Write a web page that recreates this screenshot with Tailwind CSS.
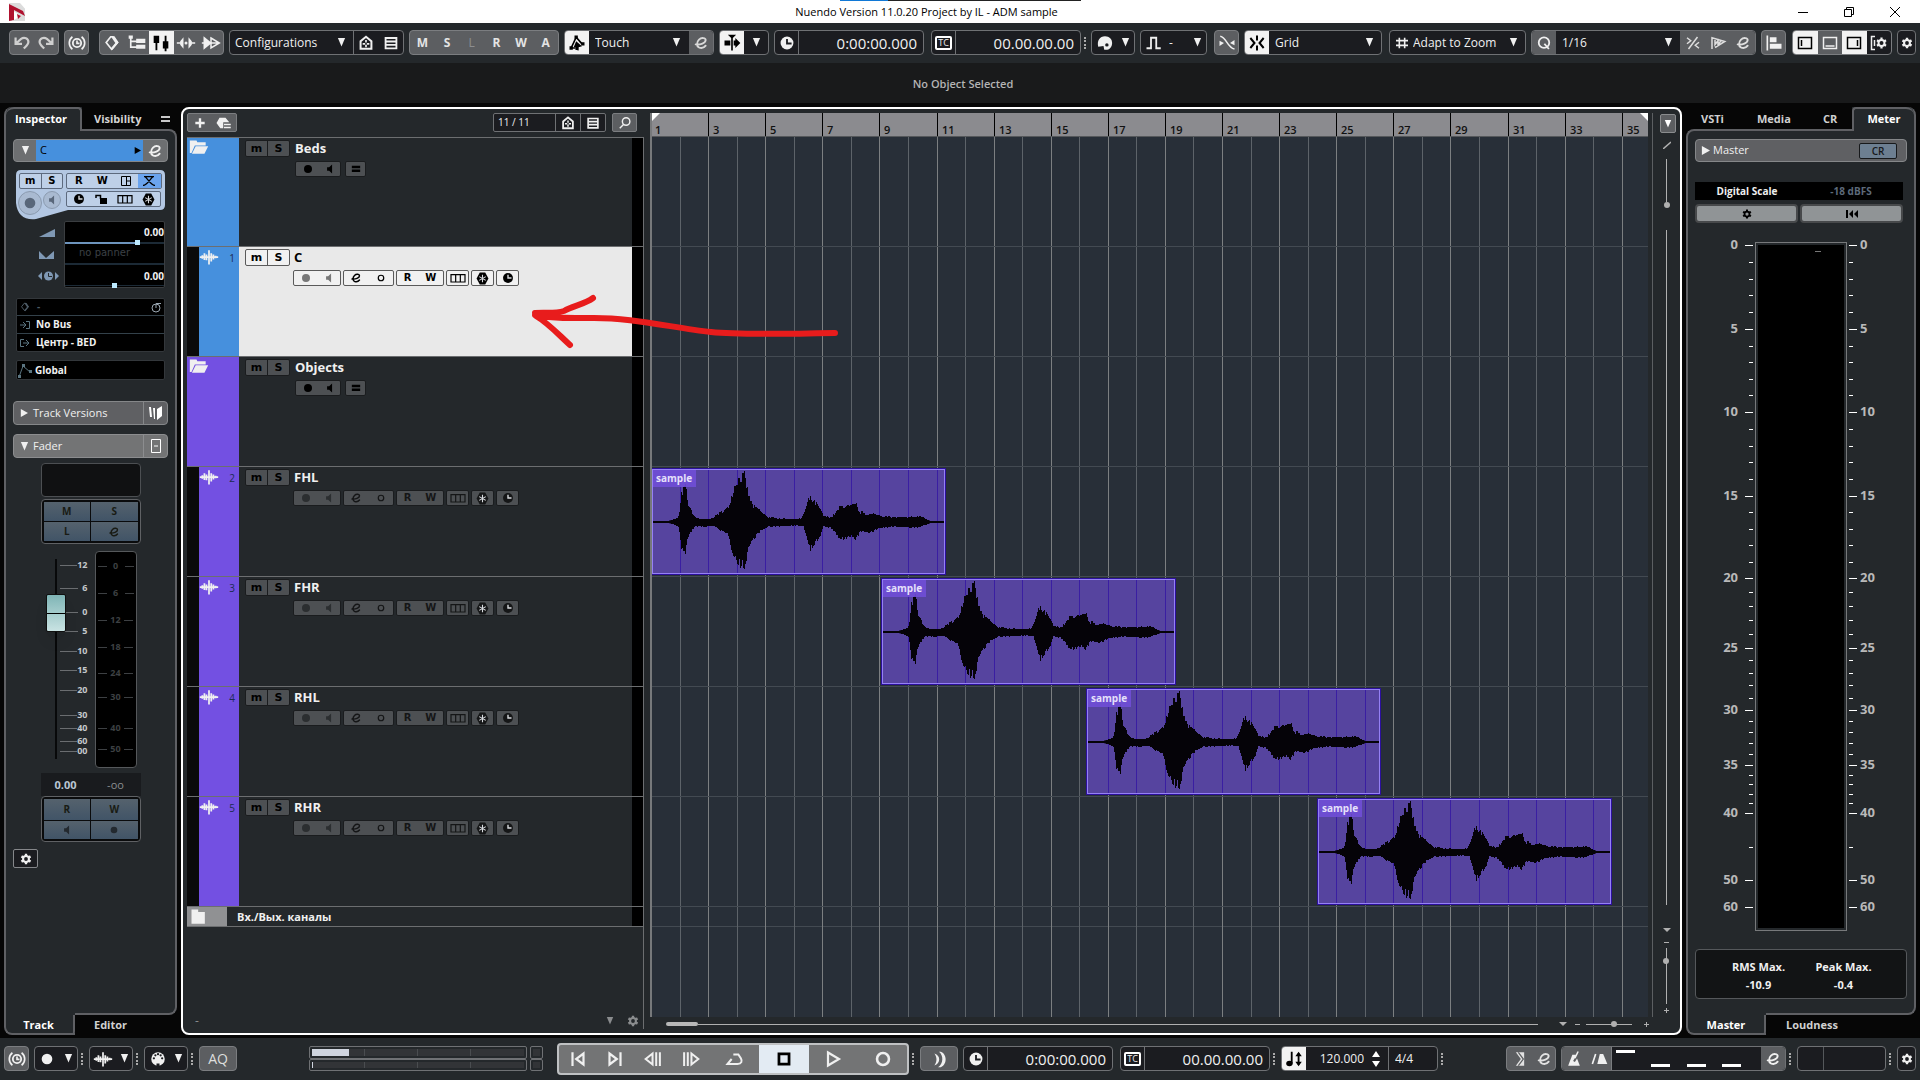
<!DOCTYPE html>
<html lang="en">
<head>
<meta charset="utf-8">
<meta name="viewport" content="width=device-width, initial-scale=1">
<title>Nuendo Version 11.0.20 Project by IL - ADM sample</title>
<script src="https://cdn.jsdelivr.net/npm/@tailwindcss/browser@4"></script>
</head>
<body class="flex min-h-screen flex-col overflow-x-hidden bg-[#060606] font-['Open_Sans','Noto_Sans',sans-serif] text-xs text-[#f0f0f0]">

<!-- Icon library, drawn on a 24px grid -->
<svg class="hidden" xmlns="http://www.w3.org/2000/svg">
  <symbol id="down" viewBox="0 0 10 10"><path fill="currentColor" d="M1 0h8L5 9.500z"/></symbol>
  <symbol id="right" viewBox="0 0 10 10"><path fill="currentColor" d="M1 0l9 5-9 5z"/></symbol>
  <symbol id="undo" viewBox="0 0 24 24"><path fill="none" stroke="currentColor" stroke-width="2.400" d="M5 6v7h7M6 12l5-4.500c3.500-2.500 8-.5 8 3.500 0 2.500-2.500 4.500-5 7"/></symbol>
  <symbol id="redo" viewBox="0 0 24 24"><path fill="none" stroke="currentColor" stroke-width="2.400" d="M19 6v7h-7M18 12l-5-4.500C9.500 5 5 7 5 11c0 2.500 2.500 4.500 5 7"/></symbol>
  <symbol id="sync" viewBox="0 0 24 24"><circle cx="12" cy="12" r="5" fill="none" stroke="currentColor" stroke-width="2.200"/><path fill="none" stroke="currentColor" stroke-width="2" d="M12 9v3.500h3M6.500 4.500c-5 4-5 11 0 15M17.500 4.500c5 4 5 11 0 15"/></symbol>
  <symbol id="cube" viewBox="0 0 24 24"><path fill="none" stroke="currentColor" stroke-width="2" d="M10.500 4.500 5 11.500l6.500 8 7-8-5.500-7z"/><path fill="currentColor" d="M10.500 4H15l5 7.500-7.500 9-2-2L16 12z"/></symbol>
  <symbol id="tree" viewBox="0 0 24 24"><path fill="currentColor" d="M2 3h5v4H2zM11 7h11v5H11zM11 14h11v5H11z"/><path fill="none" stroke="currentColor" stroke-width="2" d="M4.500 6v11H12M5 10h7"/></symbol>
  <symbol id="mixer" viewBox="0 0 24 24"><path fill="currentColor" d="M4 4h6v8H4zM6 11h2v9H6zM14 10h6v8h-6zM16 4h2v7h-2zM16 18h2v3h-2z"/></symbol>
  <symbol id="cross" viewBox="0 0 24 24"><path fill="currentColor" d="M9 5v14l-4-5v-1H1v-2h4v-1zM15 5v14l4-5v-1h4v-2h-4v-1z"/><circle cx="12" cy="12" r="1.800" fill="currentColor"/></symbol>
  <symbol id="ffwd" viewBox="0 0 24 24"><path fill="currentColor" d="M3 4l10 8-10 8z"/><path fill="none" stroke="currentColor" stroke-width="1.800" d="M12 6l10 6-10 6zM1 12h21"/></symbol>
  <symbol id="house" viewBox="0 0 24 24"><path fill="none" stroke="currentColor" stroke-width="2.400" d="M5.500 19V10L12 4.500l6.500 5.500v9z"/><path fill="none" stroke="currentColor" stroke-width="2" d="M12 8.500v3M12 14v3M8 13h3M13 13h3"/></symbol>
  <symbol id="list" viewBox="0 0 24 24"><path fill="none" stroke="currentColor" stroke-width="2.200" d="M5.500 6h13v12.500h-13zM5 10.200h14M5 14.200h14"/></symbol>
  <symbol id="auto" viewBox="0 0 24 24"><path fill="none" stroke="currentColor" stroke-width="2" d="M5 18L11 5l7 8M6 18h4"/><path fill="currentColor" d="M9 3h4v4H9zM17 11h4v4h-4zM3 16h4v4H3zM11 10l7 6-4 1v4l-4-1v-3H8z"/></symbol>
  <symbol id="edit" viewBox="0 0 24 24"><path fill="none" stroke="currentColor" stroke-width="2.800" stroke-linecap="round" d="M4 14c7 1 15-2 15-6.500C19 4.500 13 3 9 7S5 17.500 9.500 19c4 1.200 7.500-.3 9.500-3"/></symbol>
  <symbol id="follow" viewBox="0 0 24 24"><path fill="currentColor" d="M11 4h2v17h-2zM7 2h10l-5 5zM3 9h7v6H3zM14 9h2V6l6 6-6 6v-3h-2z"/></symbol>
  <symbol id="clock" viewBox="0 0 24 24"><circle cx="12" cy="12" r="7" fill="currentColor"/><path fill="none" stroke="#1b1c20" stroke-width="2" d="M12 7.500v5h5"/></symbol>
  <symbol id="clockw" viewBox="0 0 24 24"><circle cx="12" cy="12" r="8.500" fill="currentColor"/><path fill="none" stroke="#d8dade" stroke-width="2.400" d="M12 6.500V12h6"/></symbol>
  <symbol id="palette" viewBox="0 0 24 24"><path fill="currentColor" d="M12 3c6 0 9.500 4 9.500 9S18 21 15 21h-4l-1-5-7 1C1 9 5 3 12 3z"/><circle cx="14.500" cy="14.500" r="2.300" fill="#1b1c20"/></symbol>
  <symbol id="pulse" viewBox="0 0 24 24"><path fill="none" stroke="currentColor" stroke-width="2.400" d="M2 19h6V5h7v14h6"/></symbol>
  <symbol id="xfade" viewBox="0 0 24 24"><path fill="none" stroke="currentColor" stroke-width="2" d="M3 3c9 2 9 15 19 17"/><path fill="currentColor" d="M2 9l6 3-6 4zM22 8l-6 4 6 3z"/></symbol>
  <symbol id="snap" viewBox="0 0 24 24"><path fill="none" stroke="currentColor" stroke-width="2.400" d="M4 6l5 6-5 6M20 6l-5 6 5 6M12 3v6M12 15v6"/></symbol>
  <symbol id="hash" viewBox="0 0 24 24"><path fill="none" stroke="currentColor" stroke-width="2.400" d="M8 4v16M16 4v16M3 8.500h18M3 15.500h18"/></symbol>
  <symbol id="quant" viewBox="0 0 24 24"><circle cx="12" cy="11.500" r="7" fill="none" stroke="currentColor" stroke-width="2.400"/><path stroke="currentColor" stroke-width="2.400" d="M12.500 13l6 7"/></symbol>
  <symbol id="iq" viewBox="0 0 24 24"><path fill="none" stroke="currentColor" stroke-width="2" d="M4 5l5 4-5 4M18 4L6 20M20 11l-5 4 5 4"/></symbol>
  <symbol id="aq" viewBox="0 0 24 24"><path fill="none" stroke="currentColor" stroke-width="2" d="M4 20V5l17 5L8 18M8 8v6l4-5v5l4-5"/></symbol>
  <symbol id="align" viewBox="0 0 24 24"><path fill="currentColor" d="M3 3h2v18H3zM7 5h8v6H7zM7 13h14v6H7z"/></symbol>
  <symbol id="zl" viewBox="0 0 24 24"><path fill="none" stroke="currentColor" stroke-width="1.500" d="M5.500 6.500h13v11h-13zM8.500 9v6"/></symbol>
  <symbol id="zb" viewBox="0 0 24 24"><path fill="none" stroke="currentColor" stroke-width="1.500" d="M5.500 6.500h13v11h-13zM7.500 15h9"/></symbol>
  <symbol id="zr" viewBox="0 0 24 24"><path fill="none" stroke="currentColor" stroke-width="1.500" d="M5.500 6.500h13v11h-13zM15.500 9v6"/></symbol>
  <symbol id="gear" viewBox="0 0 24 24"><circle cx="12" cy="12" r="5" fill="none" stroke="currentColor" stroke-width="3.500"/><path stroke="currentColor" stroke-width="4" d="M12 3v4M12 17v4M4.200 7.500l3 1.800M16.800 14.700l3 1.800M4.200 16.500l3-1.800M16.800 9.300l3-1.800"/></symbol>
  <symbol id="setup" viewBox="0 0 24 24"><path fill="none" stroke="currentColor" stroke-width="1.500" d="M8 5.500H4.500v13H8M7.500 9v6"/><circle cx="14.500" cy="12" r="3" fill="none" stroke="currentColor" stroke-width="2"/><path stroke="currentColor" stroke-width="2.200" d="M14.500 6.500V9M14.500 15v2.500M10 9.300l2 1.200M17 13.500l2 1.200M10 14.700l2-1.200M17 10.500l2-1.200"/></symbol>
  <symbol id="plus" viewBox="0 0 24 24"><path stroke="currentColor" stroke-width="3.500" d="M12 5v14M5 12h14"/></symbol>
  <symbol id="preset" viewBox="0 0 24 24"><path fill="currentColor" d="M6 5h8l5 6h-8v8H7l-5-7z"/><path stroke="currentColor" stroke-width="2.200" d="M12 14h9M12 18h9"/></symbol>
  <symbol id="find" viewBox="0 0 24 24"><circle cx="13.500" cy="10" r="5" fill="none" stroke="currentColor" stroke-width="1.900"/><path stroke="currentColor" stroke-width="2" d="M10 14l-5 5"/></symbol>
  <symbol id="folder" viewBox="0 0 24 24"><path fill="currentColor" d="M1 3h8l1 2h10v4H7L3 18H1z"/><path fill="currentColor" d="M8 10h15l-4.500 9H3.500z"/></symbol>
  <symbol id="shut" viewBox="0 0 24 24"><path fill="currentColor" d="M3 3h8v3h8v14H3z"/></symbol>
  <symbol id="wave" viewBox="0 0 24 24"><path fill="none" stroke="currentColor" stroke-width="2.100" d="M1 12h22M4 10v4M6.500 7.500v8M9 9v7M12 4v17M14.700 7.500v10M17.300 9v6M20 10.500v3"/></symbol>
  <symbol id="rec" viewBox="0 0 24 24"><circle cx="12" cy="12" r="8" fill="currentColor"/></symbol>
  <symbol id="spk" viewBox="0 0 24 24"><path fill="currentColor" d="M5 8h5l7-7v22l-7-7H5z"/></symbol>
  <symbol id="ring" viewBox="0 0 24 24"><circle cx="12" cy="12" r="5.500" fill="none" stroke="currentColor" stroke-width="2.400"/></symbol>
  <symbol id="lanes" viewBox="0 0 24 24"><path fill="none" stroke="currentColor" stroke-width="1.800" d="M1.500 7h21v11h-21zM8.500 7v11M15.500 7v11"/></symbol>
  <symbol id="freeze" viewBox="0 0 24 24"><path fill="currentColor" d="M7 1h10l6 11-6 11H7L1 12z"/><path stroke="#d8dade" stroke-width="2" d="M12 5v14M6 8.500l12 7M18 8.500l-12 7"/></symbol>
  <symbol id="eq" viewBox="0 0 24 24"><path fill="currentColor" d="M2 4h20v6H2zM2 13h20v6H2z"/></symbol>
  <symbol id="start" viewBox="0 0 24 24"><path fill="none" stroke="currentColor" stroke-width="2.400" d="M6 4.500v15M18 6v12l-8-6z"/></symbol>
  <symbol id="end" viewBox="0 0 24 24"><path fill="none" stroke="currentColor" stroke-width="2.400" d="M18 4.500v15M6 6v12l8-6z"/></symbol>
  <symbol id="rew" viewBox="0 0 24 24"><path fill="none" stroke="currentColor" stroke-width="2.200" d="M11.500 6v12L4 12zM15.500 4.500v15M19.500 4.500v15"/></symbol>
  <symbol id="fwd" viewBox="0 0 24 24"><path fill="none" stroke="currentColor" stroke-width="2.200" d="M12.500 6v12l7.500-6zM8.500 4.500v15M4.500 4.500v15"/></symbol>
  <symbol id="cycle" viewBox="0 0 24 24"><path fill="none" stroke="currentColor" stroke-width="2.400" d="M3 18h12c5 0 6-3.500 4-7l-3-4.500H10M8 12l-5 6h7"/></symbol>
  <symbol id="play" viewBox="0 0 24 24"><path fill="none" stroke="currentColor" stroke-width="2.200" d="M6 5.500v13l11-6.500z"/></symbol>
  <symbol id="stop" viewBox="0 0 24 24"><path fill="none" stroke="currentColor" stroke-width="3" d="M6.500 6.500h11v11h-11z"/></symbol>
  <symbol id="midi" viewBox="0 0 24 24"><circle cx="12" cy="12" r="9" fill="currentColor"/><g fill="#1b1c20"><circle cx="6.500" cy="11" r="1.500"/><circle cx="8.500" cy="7" r="1.500"/><circle cx="12" cy="5.500" r="1.500"/><circle cx="15.500" cy="7" r="1.500"/><circle cx="17.500" cy="11" r="1.500"/><path d="M10 18h4v4h-4z"/></g></symbol>
  <symbol id="punch" viewBox="0 0 24 24"><path fill="currentColor" d="M14 4c6 2 8 13 0 17h-3c6-4 6-13 1-17zM7 6c7 2 7 11 0 13 3-4 3-9 0-13z"/></symbol>
  <symbol id="tempo" viewBox="0 0 24 24"><ellipse cx="7" cy="17" rx="3.500" ry="3" fill="currentColor"/><path fill="none" stroke="currentColor" stroke-width="2" d="M9.500 17V4M17 6v12"/><path fill="currentColor" d="M13.500 9L17 4l3.500 5zM13.500 15l3.500 5 3.500-5z"/></symbol>
  <symbol id="merge" viewBox="0 0 24 24"><path fill="currentColor" d="M7 4h10v16H7l6-8z"/><path stroke="#5c5e61" stroke-width="1.500" fill="none" d="M10 4l6 8-6 8"/></symbol>
  <symbol id="metro" viewBox="0 0 24 24"><path fill="currentColor" d="M5 20L10 7h4l5 13z"/><path stroke="#5c5e61" stroke-width="2.500" d="M12 15l6-10"/><path stroke="currentColor" stroke-width="1.800" d="M13 11l4-8"/></symbol>
  <symbol id="count" viewBox="0 0 24 24"><path fill="currentColor" d="M10 18l3-12h4l5 12z"/><path stroke="currentColor" stroke-width="2" d="M4 18L8 6"/></symbol>
</svg>

<!-- Window title -->
<header class="relative flex h-[23px] shrink-0 items-center bg-white text-black">
  <svg class="ml-2 size-5" viewBox="0 0 20 20"><path fill="#dcdcdc" d="M1 1h16v18H1z"/><path fill="#fff" d="M12 1h7v8zM4 19V8l9 6z"/><path fill="#b0122f" d="M1 2l14 7 2 5-11-6v10l-5 1z"/><path fill="#b0122f" d="M9 12l4 2-3 3z"/></svg>
  <h1 class="absolute inset-x-0 pr-[67px] text-center text-[11px] leading-6">Nuendo Version 11.0.20 Project by IL - ADM sample</h1>
  <div class="absolute top-0 left-[840px] flex h-px w-[241px] bg-[#222]"><div class="w-12 bg-[#1078d6]"></div></div>
  <div class="relative ml-auto flex items-center gap-9 pr-5">
    <button aria-label="Minimise"><svg class="size-[10px]" viewBox="0 0 10 10"><path stroke="#000" d="M0 5.500h10"/></svg></button>
    <button aria-label="Restore"><svg class="size-[10px]" viewBox="0 0 10 10"><path fill="none" stroke="#000" d="M.5 2.500h7v7h-7zM2.500 2.500v-2h7v7h-2"/></svg></button>
    <button aria-label="Close"><svg class="size-[10px]" viewBox="0 0 10 10"><path stroke="#000" d="M0 0l10 10M10 0L0 10"/></svg></button>
  </div>
</header>

<!-- Project toolbar -->
<nav aria-label="Project toolbar" class="flex h-10 shrink-0 items-center gap-[5px] bg-[#24282b] pr-1 pl-[9px] pb-px">
  <div class="flex h-[25px] w-[50px] shrink-0 items-center justify-around rounded-sm border border-[#7b7d80] bg-[#5c5e61]">
    <button aria-label="Undo" class="text-[#cfcfcf]"><svg class="size-[22px]"><use href="#undo"/></svg></button>
    <button aria-label="Redo" class="text-[#cfcfcf]"><svg class="size-[22px]"><use href="#redo"/></svg></button>
  </div>
  <button aria-label="Sync" class="mr-[5px] flex size-[25px] shrink-0 items-center justify-center rounded-sm border border-[#7b7d80] bg-[#5c5e61]"><svg class="size-5"><use href="#sync"/></svg></button>
  <div class="flex h-[25px] w-[125px] shrink-0 overflow-hidden rounded-sm border border-[#7b7d80] bg-[#5c5e61]">
    <button aria-label="Edit source" class="flex flex-1 items-center justify-center"><svg class="size-5"><use href="#cube"/></svg></button>
    <button aria-label="Tree" class="flex flex-1 items-center justify-center"><svg class="size-5"><use href="#tree"/></svg></button>
    <button aria-label="Mixer" class="flex flex-1 items-center justify-center bg-[#f2f2f2] text-black"><svg class="size-[22px]"><use href="#mixer"/></svg></button>
    <button aria-label="Crossfade" class="flex flex-1 items-center justify-center"><svg class="size-5"><use href="#cross"/></svg></button>
    <button aria-label="Forward" class="flex flex-1 items-center justify-center"><svg class="size-5"><use href="#ffwd"/></svg></button>
  </div>
  <div class="flex h-[25px] w-[175px] shrink-0 rounded-sm border border-[#6f7174] bg-[#1b1c20]">
    <label class="relative flex flex-1 items-center"><select aria-label="Configurations" class="w-full appearance-none bg-transparent pl-[5px] text-xs outline-none"><option>Configurations</option></select><svg class="pointer-events-none absolute right-[7px] size-[9px]"><use href="#down"/></svg></label>
    <button aria-label="Zones" class="flex w-[25px] items-center justify-center border-l border-[#6f7174]"><svg class="size-5"><use href="#house"/></svg></button>
    <button aria-label="Divide list" class="flex w-[25px] items-center justify-center"><svg class="size-5"><use href="#list"/></svg></button>
  </div>
  <div class="flex h-[25px] w-[150px] shrink-0 rounded-sm border border-[#7b7d80] bg-[#5c5e61] font-bold text-[#e4e4e4]">
    <button class="flex-1">M</button><button class="flex-1">S</button><button class="flex-1 font-normal text-[#8c8e90]">L</button><button class="flex-1">R</button><button class="flex-1">W</button><button class="flex-1">A</button>
  </div>
  <div class="flex h-[25px] w-[150px] shrink-0 overflow-hidden rounded-sm border border-[#6f7174] bg-[#1b1c20]">
    <button aria-label="Automation panel" class="flex w-6 items-center justify-center bg-[#f2f2f2] text-black"><svg class="size-5"><use href="#auto"/></svg></button>
    <label class="relative flex flex-1 items-center"><select aria-label="Automation mode" class="w-full appearance-none bg-transparent pl-1.5 text-xs outline-none"><option>Touch</option></select><svg class="pointer-events-none absolute right-2 size-[9px]"><use href="#down"/></svg></label>
    <button aria-label="Edit automation" class="flex w-6 items-center justify-center bg-[#5c5e61] text-[#d8d8d8]"><svg class="size-4"><use href="#edit"/></svg></button>
  </div>
  <div class="flex h-[25px] w-[50px] shrink-0 overflow-hidden rounded-sm border border-[#6f7174] bg-[#1b1c20]">
    <button aria-label="Auto-scroll" class="flex w-6 items-center justify-center bg-[#f2f2f2] text-black"><svg class="size-5"><use href="#follow"/></svg></button>
    <button aria-label="Auto-scroll options" class="flex flex-1 items-center justify-center"><svg class="size-[9px]"><use href="#down"/></svg></button>
  </div>
  <div class="mr-0.5 flex h-[25px] w-[150px] shrink-0 rounded-sm border border-[#6f7174] bg-[#1b1c20]">
    <button aria-label="Time format" class="flex w-6 items-center justify-center border-r border-[#6f7174]"><svg class="size-[22px]"><use href="#clock"/></svg></button>
    <input aria-label="Primary time" value="0:00:00.000" class="w-0 flex-1 bg-transparent pr-1.5 text-right text-[15px] outline-none">
  </div>
  <div class="flex h-[25px] w-[150px] shrink-0 rounded-sm border border-[#6f7174] bg-[#1b1c20]">
    <button aria-label="Timecode" class="flex w-6 items-center justify-center border-r border-[#6f7174]"><span class="rounded-xs border-2 border-white px-px text-[9px] leading-[10px]">TC</span></button>
    <input aria-label="Secondary time" value="00.00.00.00" class="w-0 flex-1 bg-transparent pr-1.5 text-right text-[15px] outline-none">
  </div>
  <div class="-mx-0.5 h-3 border-l-2 border-dotted border-[#aaa]"></div>
  <button aria-label="Colour" class="ml-[2px] flex h-[25px] w-11 shrink-0 items-center justify-around rounded-sm border border-[#6f7174] bg-[#1b1c20]"><svg class="size-[18px]"><use href="#palette"/></svg><svg class="size-[9px]"><use href="#down"/></svg></button>
  <div class="relative mr-0.5 flex h-[25px] w-[67px] shrink-0 items-center rounded-sm border border-[#6f7174] bg-[#1b1c20]"><svg class="ml-1 size-[18px]"><use href="#pulse"/></svg><select aria-label="Nudge" class="absolute inset-0 appearance-none pl-7 text-xs outline-none"><option>-</option></select><svg class="mr-1 ml-auto size-[9px]"><use href="#down"/></svg></div>
  <button aria-label="Zero crossings" class="flex size-[25px] shrink-0 items-center justify-center rounded-sm border border-[#7b7d80] bg-[#5c5e61]"><svg class="size-[18px]"><use href="#xfade"/></svg></button>
  <div class="mr-0.5 flex h-[25px] w-[138px] shrink-0 overflow-hidden rounded-sm border border-[#6f7174] bg-[#1b1c20]">
    <button aria-label="Snap" class="flex w-6 items-center justify-center bg-[#f2f2f2] text-black"><svg class="size-5"><use href="#snap"/></svg></button>
    <label class="relative flex flex-1 items-center"><select aria-label="Snap type" class="w-full appearance-none bg-transparent pl-1.5 text-xs outline-none"><option>Grid</option></select><svg class="pointer-events-none absolute right-[7px] size-[9px]"><use href="#down"/></svg></label>
  </div>
  <label class="relative flex h-[25px] w-[137px] shrink-0 items-center rounded-sm border border-[#6f7174] bg-[#1b1c20]"><svg class="ml-1 size-4"><use href="#hash"/></svg><select aria-label="Grid type" class="absolute inset-0 appearance-none pl-[23px] text-xs outline-none"><option>Adapt to Zoom</option></select><svg class="mr-[7px] ml-auto size-[9px]"><use href="#down"/></svg></label>
  <div class="flex h-[25px] w-[225px] shrink-0 overflow-hidden rounded-sm border border-[#6f7174] bg-[#1b1c20]">
    <button aria-label="Quantize" class="flex w-6 items-center justify-center bg-[#5c5e61]"><svg class="size-[18px]"><use href="#quant"/></svg></button>
    <label class="relative flex flex-1 items-center"><select aria-label="Quantize preset" class="w-full appearance-none bg-transparent pl-1.5 text-xs outline-none"><option>1/16</option></select><svg class="pointer-events-none absolute right-[7px] size-[9px]"><use href="#down"/></svg></label>
    <div class="flex w-[75px] items-center justify-around bg-[#5c5e61] text-[#dedede]">
      <button aria-label="Iterative quantize"><svg class="size-[18px]"><use href="#iq"/></svg></button><button aria-label="Auto quantize"><svg class="size-[18px]"><use href="#aq"/></svg></button><button aria-label="Quantize panel"><svg class="size-4"><use href="#edit"/></svg></button>
    </div>
  </div>
  <button aria-label="Align" class="flex size-[25px] shrink-0 items-center justify-center rounded-sm border border-[#7b7d80] bg-[#5c5e61]"><svg class="size-5"><use href="#align"/></svg></button>
  <div class="ml-auto flex h-[25px] w-[100px] shrink-0 overflow-hidden rounded-sm border border-[#7b7d80] bg-[#1b1c20]">
    <button aria-label="Left zone" class="flex flex-1 items-center justify-center bg-[#f2f2f2] text-black"><svg class="size-6 shrink-0"><use href="#zl"/></svg></button>
    <button aria-label="Lower zone" class="flex flex-1 items-center justify-center bg-[#5c5e61]"><svg class="size-6 shrink-0"><use href="#zb"/></svg></button>
    <button aria-label="Right zone" class="flex flex-1 items-center justify-center bg-[#f2f2f2] text-black"><svg class="size-6 shrink-0"><use href="#zr"/></svg></button>
    <button aria-label="Window layout" class="flex flex-1 items-center justify-center"><svg class="size-6 shrink-0"><use href="#setup"/></svg></button>
  </div>
  <button aria-label="Toolbar setup" class="flex h-[25px] w-[19px] shrink-0 items-center justify-center rounded-sm border border-[#6f7174] bg-[#1b1c20]"><svg class="size-[14px]"><use href="#gear"/></svg></button>
</nav>

<div class="flex h-10 shrink-0 items-center justify-center bg-[#191a1b] pt-0.5 pl-[6px] text-[11px] font-semibold text-[#b4b4b4]">No Object Selected</div>

<main class="flex flex-1 gap-1 px-1 pt-1 pb-[3px]">
  <!-- Inspector -->
  <aside class="flex w-[173px] shrink-0 flex-col">
    <div class="flex h-8">
      <div class="w-[78px] rounded-tl-lg border-l-2 border-[#5f6064] bg-[#24282b]">
        <button class="h-6 w-full rounded-tl-lg rounded-tr-sm border-t-2 border-r-2 border-[#5f6064] pr-1 pb-px text-center text-[11px] font-bold text-white">Inspector</button>
      </div>
      <div class="flex flex-1 flex-col">
        <div class="flex h-[22px] items-center justify-between pr-[7px] pl-3"><button class="pt-0.5 text-[11px] font-bold text-[#d4d4d4]">Visibility</button><button aria-label="Tab menu" class="mt-0.5 h-[6px] w-[9px] border-y-2 border-[#c8c8c8]"></button></div>
        <div class="-ml-0.5 flex-1 rounded-tr-lg border-t-2 border-r-2 border-[#5f6064] bg-[#24282b]"></div>
      </div>
    </div>
    <div class="flex flex-1 flex-col border-x-2 border-[#5f6064] bg-[#24282b] px-[7px]">
      <div class="flex h-[23px] rounded-sm border border-[#858789] bg-[#6d6f71]">
        <button aria-label="Collapse" class="flex w-[22px] items-center justify-center"><svg class="size-[9px]"><use href="#down"/></svg></button>
        <div class="flex flex-1 items-center justify-between bg-[#4690dd] px-1 text-[11px] text-black"><span>C</span><svg class="-mr-0.5 size-[7px]"><use href="#right"/></svg></div>
        <button aria-label="Edit channel" class="flex w-6 items-center justify-center"><svg class="size-4"><use href="#edit"/></svg></button>
      </div>
      <!-- Channel controls -->
      <div class="relative mx-[3px] mt-2 h-[50px] text-black">
        <svg class="absolute inset-0 h-[50px] w-[149px]" viewBox="0 0 149 50"><path fill="#b3c7e2" d="M5 0h139q5 0 5 5v30q0 5-5 5H52L20 49Q2 51 0 33V5q0-5 5-5z"/></svg>
        <div class="relative flex gap-[3px] p-[3px] pb-0 font-['DejaVu_Sans',sans-serif] text-[10px] font-bold">
          <div class="flex h-4 w-11 rounded-xs border border-[#5d6a7e] bg-[#bed0e8]"><button class="flex-1 border-r border-[#5d6a7e] leading-3">m</button><button class="flex-1 leading-3">S</button></div>
          <div class="flex h-4 flex-1 items-center rounded-xs border border-[#5d6a7e] bg-[#bed0e8]"><button class="flex-1 leading-3">R</button><button class="flex-1 leading-3">W</button><button aria-label="Channel layout" class="flex flex-1 justify-center"><svg class="size-[10px]" viewBox="0 0 10 10"><path fill="none" stroke="#000" d="M.5.5h9v9h-9zM5.500 0v10M5.500 5h4"/></svg></button><button aria-label="Auto fades" class="flex h-full flex-1 items-center justify-center bg-[#6ba4ee]"><svg class="h-[10px] w-3" viewBox="0 0 12 10"><path fill="none" stroke="#000" stroke-width="1.300" d="M1 .5h10M0 9.500c4 0 6-5 10-9M12 9.500c-4 0-6-5-10-9"/></svg></button></div>
        </div>
        <div class="relative flex gap-px pt-0.5 pl-0.5">
          <button aria-label="Record enable" class="flex size-6 items-center justify-center rounded-full border border-[#8b9bb0] bg-[#a9bad1] text-[#59677a]"><svg class="size-4"><use href="#rec"/></svg></button>
          <button aria-label="Monitor" class="flex size-[18px] items-center justify-center rounded-full border border-[#8b9bb0] bg-[#a9bad1] text-[#59677a]"><svg class="size-[10px]"><use href="#spk"/></svg></button>
          <div class="ml-1 flex h-4 w-[95px] items-center justify-around rounded-xs border border-[#5d6a7e] bg-[#bed0e8]"><button aria-label="Time base"><svg class="size-[14px]"><use href="#clockw"/></svg></button><button aria-label="Lock"><svg class="h-[10px] w-3" viewBox="0 0 12 10"><path d="M5 4h7v6H5z"/><path fill="none" stroke="#000" stroke-width="1.500" d="M1 4V1.500h4.500V5"/></svg></button><button aria-label="Lanes"><svg class="size-4"><use href="#lanes"/></svg></button><button aria-label="Freeze"><svg class="size-[13px]"><use href="#freeze"/></svg></button></div>
        </div>
      </div>
      <!-- Volume, pan, delay -->
      <div class="mx-[3px] mt-px flex">
        <div class="flex w-12 flex-col items-end gap-3 pt-2 pr-[9px] text-[#7f98b4]">
          <svg class="h-2 w-4" viewBox="0 0 16 8"><path fill="currentColor" d="M0 8h16V0z"/></svg>
          <svg class="mt-0.5 h-2 w-4" viewBox="0 0 16 8"><path fill="currentColor" d="M0 0l7 7 8-7v8H0z"/></svg>
          <svg class="-mr-1 h-[10px] w-[21px]" viewBox="0 0 21 10"><circle cx="10.500" cy="5" r="4.500" fill="currentColor"/><path fill="currentColor" d="M4 1v8L0 5zM17 1v8l4-4z"/><path fill="none" stroke="#24282b" d="M10.500 2v3.500H14"/></svg>
        </div>
        <div class="h-[67px] flex-1 rounded-xs border border-[#3a3d40] bg-black text-[10px] font-bold">
          <div class="h-5 pt-[3px] text-right leading-[15px]">0.00</div>
          <div class="relative h-[2px] bg-[#1c2a36]"><div class="h-full w-[72px] bg-[#6d94bd]"></div><div class="absolute -top-0.5 left-[70px] h-[5px] w-[5px] bg-[#bdeaff]"></div></div>
          <div class="h-[19px] pl-3.5 font-['DejaVu_Sans',sans-serif] text-[10px] leading-[18px] font-normal text-[#3c4146]">no panner</div>
          <div class="h-[2px] bg-[#1c2a36]"></div>
          <div class="h-5 pt-1 text-right leading-[15px]">0.00</div>
          <div class="relative h-px bg-[#1c2a36]"><div class="absolute -top-0.5 left-[47px] h-[5px] w-[5px] bg-[#bdeaff]"></div></div>
        </div>
      </div>
      <div class="mx-[3px] mt-2.5 rounded-xs border border-[#33373b] bg-black text-[10px] font-bold">
        <button class="flex h-[17px] w-full items-center gap-1 border-b border-[#33414a] px-0.5 text-[#4d5b66]"><svg class="size-3"><use href="#cube"/></svg><span class="mr-auto pl-0.5">-</span><svg class="size-3" viewBox="0 0 12 12"><circle cx="6" cy="7" r="4" fill="none" stroke="#9aa7b2"/><path stroke="#9aa7b2" d="M6 3v4M6 2.500h5"/></svg></button>
        <button class="flex h-[18px] w-full items-center gap-1.5 border-b border-[#33414a] pt-px pl-[3px]"><svg class="size-[10px]" viewBox="0 0 10 10"><path fill="none" stroke="#5b7581" d="M0 5h6M3 2l3 3-3 3M6 1.500h3.500v7H6"/></svg>No Bus</button>
        <button class="flex h-[17px] w-full items-center gap-1.5 pl-[3px]"><svg class="size-[10px]" viewBox="0 0 10 10"><path fill="none" stroke="#5b7581" d="M3 5h6M6 2l3 3-3 3M4 1.500H.5v7H4"/></svg>Центр - BED</button>
      </div>
      <button class="mx-[3px] mt-2 flex h-5 items-center gap-[3px] rounded-xs border border-[#33373b] bg-black pt-0.5 pl-px text-[10px] font-bold"><svg class="h-3.5 w-3.5" viewBox="0 0 14 14"><path fill="none" stroke="#5b7581" d="M1 13L5 2l7 6"/><path fill="#5b7581" d="M0 11h3v3H0zM4 0h3v3H4zM11 6h3v3h-3z"/></svg>Global</button>
      <div class="mt-[21px] flex h-6 rounded-sm border border-[#858789] bg-[#5f6063] text-[11px]">
        <button class="flex flex-1 items-center gap-[5px] pl-1.5"><svg class="size-2"><use href="#right"/></svg>Track Versions</button>
        <button aria-label="Version options" class="flex w-6 items-center justify-center border-l border-[#858789]"><svg class="h-[14px] w-[14px]" viewBox="0 0 14 14"><path fill="#fff" d="M0 1h2l1 10H1zM4 2h2v11H5zM8 3l5-3v10l-5 4z"/></svg></button>
      </div>
      <div class="mt-[9px] flex h-6 rounded-sm border border-[#8c8d8f] bg-[#737475] text-[11px]">
        <button class="flex flex-1 items-center gap-1 pl-1.5"><svg class="size-[9px]"><use href="#down"/></svg>Fader</button>
        <button aria-label="Fader options" class="flex w-6 items-center justify-center border-l border-[#8c8d8f]"><svg class="h-[14px] w-[10px]" viewBox="0 0 10 14"><path fill="none" stroke="#fff" d="M.5.500h9v13h-9zM3 7h4"/></svg></button>
      </div>
      <div class="mx-auto w-[100px]">
        <div class="mt-[5px] h-[34px] rounded-sm border border-[#4c4f52] bg-[#101112]"></div>
        <div class="mt-0.5 grid h-[45px] grid-cols-2 gap-px rounded-sm border border-[#5f6164] bg-[#0a0b0c] p-0.5 text-[10px] font-bold text-[#191b14]">
          <button class="bg-linear-to-b from-[#55626d] to-[#415467]">M</button><button class="bg-linear-to-b from-[#55626d] to-[#415467]">S</button><button class="bg-linear-to-b from-[#55626d] to-[#415467]">L</button><button aria-label="Edit" class="flex items-center justify-center bg-linear-to-b from-[#55626d] to-[#415467]"><svg class="size-3"><use href="#edit"/></svg></button>
        </div>
      </div>
      <!-- Fader with scale and level meter -->
      <div class="mx-auto flex h-[224px] w-[100px] pt-[7px]">
        <div id="faderScale" class="relative h-full w-[50px] text-[9px] font-bold text-[#c4c8cc]">
          <div class="absolute top-2 left-[14px] h-[200px] w-0.5 bg-[#08090a]"></div>
          <div class="absolute top-[43px] left-[5px] z-10 h-[38px] w-5 rounded-xs border border-[#101010] bg-linear-to-b from-[#7fb5b6] to-[#c9e3e3] shadow-lg"><div class="mt-[18px] h-px bg-black"></div></div>
        </div>
        <div id="meterScale" class="relative ml-1 h-[217px] w-[42px] rounded-sm border border-[#55585b] bg-black text-[9px] font-bold text-[#3d4043]"></div>
      </div>
      <div class="mx-auto w-[100px]">
        <div class="mt-[5px] grid h-[23px] grid-cols-2 place-items-center bg-[#191b1e] pt-px text-[11px] font-bold text-[#b9c6d3]"><span>0.00</span><span class="font-normal text-[#8a8d90]">-oo</span></div>
        <div class="grid h-[46px] grid-cols-2 gap-px rounded-sm border border-[#5f6164] bg-[#0a0b0c] p-0.5 text-[10px] font-bold text-[#191b14]">
          <button class="bg-linear-to-b from-[#55626d] to-[#415467]">R</button><button class="bg-linear-to-b from-[#55626d] to-[#415467]">W</button><button aria-label="Monitor" class="flex items-center justify-center bg-linear-to-b from-[#55626d] to-[#415467] text-[#23292f]"><svg class="size-[10px]"><use href="#spk"/></svg></button><button aria-label="Record" class="flex items-center justify-center bg-linear-to-b from-[#55626d] to-[#415467] text-[#23292f]"><svg class="size-[10px]"><use href="#rec"/></svg></button>
        </div>
      </div>
      <button aria-label="Inspector setup" class="mt-[7px] flex h-[19px] w-[25px] items-center justify-center rounded-xs border border-[#85878a] bg-[#1b1c20]"><svg class="size-[14px]"><use href="#gear"/></svg></button>
    </div>
    <div class="flex h-7 text-[11px] font-bold">
      <div class="flex w-[71px] flex-col rounded-bl-lg border-b-2 border-l-2 border-[#5f6064] bg-[#24282b]"><div class="h-2"></div><button class="-mb-0.5 flex-1 rounded-br-sm border-r-2 border-[#5f6064] pr-0.5 text-white">Track</button></div>
      <div class="flex flex-1 flex-col"><div class="h-2 rounded-br-lg border-r-2 border-b-2 border-[#5f6064] bg-[#24282b]"></div><button class="self-start pl-[19px] leading-5 text-[#d0d0d0]">Editor</button></div>
    </div>
  </aside>

  <!-- Project window -->
  <section class="relative flex min-w-0 flex-1 rounded-lg border-2 border-white bg-[#24282b]">
    <div class="flex w-[461px] shrink-0 flex-col pt-1 pl-1">
      <div class="flex h-6 items-start">
        <div class="flex h-[19px] w-[50px] items-center justify-around rounded-xs border border-[#7b7d80] bg-[#5c5e61]"><button aria-label="Add track"><svg class="size-4"><use href="#plus"/></svg></button><button aria-label="Track preset"><svg class="size-[18px]"><use href="#preset"/></svg></button></div>
        <div class="ml-auto flex h-[19px] w-[113px] items-center rounded-xs border border-[#6f7174] bg-[#1b1c20] text-[10px]"><span class="flex-1 pl-1">11 / 11</span><button aria-label="Visibility agents" class="flex h-full w-[25px] items-center justify-center border-l border-[#6f7174]"><svg class="size-[18px]"><use href="#house"/></svg></button><button aria-label="Track types" class="flex h-full w-[25px] items-center justify-center border-l border-[#6f7174]"><svg class="size-[18px]"><use href="#list"/></svg></button></div>
        <button aria-label="Find track" class="ml-1.5 mr-[7px] flex h-[19px] w-[25px] items-center justify-center rounded-xs border border-[#7b7d80] bg-[#5c5e61]"><svg class="size-[18px]"><use href="#find"/></svg></button>
      </div>
      <div id="tracks" class="flex flex-1 flex-col border-t border-r border-[#6c6e70]"></div>
      <div class="flex h-4 items-center gap-3 border-r border-[#6c6e70] pr-[3px] pl-2 text-[#8a8c8e]"><span class="mr-auto">-</span><svg class="size-2"><use href="#down"/></svg><svg class="size-[14px]"><use href="#gear"/></svg></div>
      <div class="h-1"></div>
    </div>
    <div class="ml-[6px] flex min-w-0 flex-1 flex-col pt-1">
      <div class="flex min-h-0 flex-1">
        <div class="relative flex min-w-0 flex-1 flex-col border-l-2 border-[#77797b]">
          <div id="ruler" class="relative mr-1 h-6 overflow-hidden border-b border-[#55585b] bg-[#8b8b8f] text-[11px] font-semibold text-[#111]">
            <svg class="absolute top-0 left-0 size-2" viewBox="0 0 8 8"><path fill="#fff" d="M0 0h8L0 8z"/></svg>
            <svg class="absolute top-0 right-0 size-2" viewBox="0 0 8 8"><path fill="#fff" d="M0 0h8v8z"/></svg>
          </div>
          <div id="lanes-area" class="relative mr-1 flex-1 overflow-hidden bg-[#282f38]"></div>
        </div>
        <div class="flex w-7 flex-col items-center border-l border-[#5c5f62] text-[#b0b0b0]">
          <button aria-label="Ruler menu" class="mt-px mr-0.5 ml-1 flex h-[19px] w-4 items-center justify-center rounded-xs border border-[#8a8c8e] bg-[#5c5e61] text-white"><svg class="size-2"><use href="#down"/></svg></button>
          <svg class="mt-2 size-2" viewBox="0 0 8 8"><path stroke="currentColor" stroke-width="1.500" d="M0 8l8-7"/></svg>
          <div class="mt-2.5 h-[43px] w-px bg-current"></div><div class="size-[6px] rounded-full bg-current"></div>
          <div class="mt-[22px] w-px flex-1 bg-current"></div>
          <svg class="mt-[21px] size-2" viewBox="0 0 8 8"><path fill="currentColor" d="M0 2h8L4 6z"/></svg>
          <div class="mt-2 h-px w-[5px] bg-current"></div>
          <div class="relative mt-[5px] h-14 w-px bg-current"><div class="absolute top-2.5 -left-[3px] size-[6px] rounded-full bg-current"></div></div>
          <svg class="mt-1 size-[5px]" viewBox="0 0 5 5"><path stroke="currentColor" d="M2.500 0v5M0 2.500h5"/></svg>
          <div class="h-1"></div>
        </div>
      </div>
      <div class="flex h-4 items-center pr-[31px] pl-4 pb-0.5 text-[#b0b0b0]">
        <div class="h-1 w-8 rounded-full bg-[#b8b8b8]"></div><div class="h-px flex-1 bg-current"></div>
        <svg class="ml-[21px] size-2" viewBox="0 0 8 8"><path fill="currentColor" d="M0 2h8L4 6z"/></svg>
        <div class="ml-2 h-px w-[5px] bg-current"></div>
        <div class="relative mx-1.5 h-px w-[46px] bg-current"><div class="absolute -top-[3px] left-[25px] size-[6px] rounded-full bg-current"></div></div>
        <svg class="ml-1.5 size-[5px]" viewBox="0 0 5 5"><path stroke="currentColor" d="M2.500 0v5M0 2.500h5"/></svg>
      </div>
    </div>
    <!-- Hand-drawn annotation -->
    <svg class="pointer-events-none absolute top-[181px] left-[344px] h-[64px] w-[320px]" viewBox="0 0 320 64" fill="none" stroke="#e81c1c" stroke-width="6" stroke-linecap="round" stroke-linejoin="round"><path d="M66 8c-8 6-20 8-29 13-10 3-19 1-29 2M308 43c-45 1-95 2-124-1-38-4-80-15-122-14-17 0-36 1-54-3M9 26c12 7 22 18 34 29"/></svg>
  </section>

  <!-- Meter panel -->
  <aside class="flex w-[230px] shrink-0 flex-col">
    <div class="flex h-8 text-[11px] font-bold text-[#d0d0d0]">
      <div class="flex flex-1 flex-col">
        <div class="flex h-[22px] items-center pt-0.5 pl-[15px]"><button class="w-14 text-left">VSTi</button><button class="w-[66px] text-left">Media</button><button>CR</button></div>
        <div class="-mr-0.5 flex-1 rounded-tl-lg border-t-2 border-l-2 border-[#5f6064] bg-[#24282b]"></div>
      </div>
      <div class="w-16 rounded-tr-lg border-r-2 border-[#5f6064] bg-[#24282b]"><button class="h-6 w-full rounded-tl-sm rounded-tr-lg border-t-2 border-l-2 border-[#5f6064] pb-px text-white">Meter</button></div>
    </div>
    <div class="flex flex-1 flex-col border-x-2 border-[#5f6064] bg-[#24282b] px-[7px]">
      <div class="flex h-[23px] items-center gap-[3px] rounded-sm border border-[#858789] bg-[#5f6063] pr-[9px] pl-[5px] text-[11px]"><svg class="size-[9px]"><use href="#right"/></svg><span class="mr-auto">Master</span><button class="h-4 w-[38px] rounded-xs border border-[#17191b] bg-[#6d7f91] text-[10px] leading-3 font-semibold text-[#17191b]">CR</button></div>
      <div class="mt-5 mr-1 grid h-[18px] grid-cols-2 place-items-center bg-black pt-0.5 text-[10px] font-bold"><span>Digital Scale</span><span class="text-[#5d6a7a]">-18 dBFS</span></div>
      <div class="mt-1 mr-1 grid h-[19px] grid-cols-2 gap-0.5 text-black">
        <button aria-label="Meter settings" class="flex items-center justify-center rounded-sm border-2 border-[#47494b] bg-[#909496]"><svg class="size-3"><use href="#gear"/></svg></button>
        <button aria-label="Reset meter" class="flex items-center justify-center rounded-sm border-2 border-[#47494b] bg-[#909496]"><svg class="h-2 w-3" viewBox="0 0 12 8"><path d="M0 0h2v8H0zM7 0v8L3 4zM12 0v8L8 4z"/></svg></button>
      </div>
      <div class="relative mt-[19px] h-[689px]">
        <div class="absolute inset-y-0 left-[60px] w-[92px] border border-[#77797b] bg-black outline-2 -outline-offset-3 outline-[#24282b]"><div class="mt-[8px] ml-[59px] h-px w-1.5 bg-[#777]"></div></div>
        <div id="masterScale" class="absolute inset-0 text-[13px] font-bold text-[#b9b9b9]"></div>
      </div>
      <dl class="mt-[18px] grid h-[50px] grid-cols-2 content-center rounded-sm border border-[#55585b] bg-[#121415] px-5 pt-[3px] text-center text-[11px] leading-[18px] font-bold"><dt>RMS Max.</dt><dt>Peak Max.</dt><dd>-10.9</dd><dd>-0.4</dd></dl>
    </div>
    <div class="flex h-7 text-[11px] font-bold">
      <div class="flex w-20 flex-col rounded-bl-lg border-b-2 border-l-2 border-[#5f6064] bg-[#24282b]"><div class="h-2"></div><button class="-mb-0.5 flex-1 rounded-br-sm border-r-2 border-[#5f6064] text-white">Master</button></div>
      <div class="flex flex-1 flex-col"><div class="h-2 rounded-br-lg border-r-2 border-b-2 border-[#5f6064] bg-[#24282b]"></div><button class="self-start pl-5 leading-5 text-[#d0d0d0]">Loudness</button></div>
    </div>
  </aside>
</main>

<!-- Transport bar -->
<footer class="flex h-[42px] shrink-0 items-center gap-[5px] bg-[#24282b] px-1 pb-px">
  <button aria-label="Sync" class="flex size-[25px] shrink-0 items-center justify-center rounded-sm border border-[#7b7d80] bg-[#5c5e61]"><svg class="size-5"><use href="#sync"/></svg></button>
  <button aria-label="Record mode" class="flex h-[25px] w-11 shrink-0 items-center justify-around rounded-sm border border-[#6f7174] bg-[#1b1c20]"><svg class="size-4"><use href="#rec"/></svg><svg class="size-[9px]"><use href="#down"/></svg></button>
  <div class="-mx-0.5 h-3 border-l-2 border-dotted border-[#aaa]"></div>
  <button aria-label="Audio mode" class="ml-[3px] flex h-[25px] w-11 shrink-0 items-center justify-around rounded-sm border border-[#6f7174] bg-[#1b1c20]"><svg class="size-5"><use href="#wave"/></svg><svg class="size-[9px]"><use href="#down"/></svg></button>
  <div class="-mx-0.5 h-3 border-l-2 border-dotted border-[#aaa]"></div>
  <button aria-label="MIDI mode" class="ml-[3px] flex h-[25px] w-11 shrink-0 items-center justify-around rounded-sm border border-[#6f7174] bg-[#1b1c20]"><svg class="size-[18px]"><use href="#midi"/></svg><svg class="size-[9px]"><use href="#down"/></svg></button>
  <div class="-mx-0.5 h-3 border-l-2 border-dotted border-[#aaa]"></div>
  <button class="ml-[3px] h-[25px] w-[38px] shrink-0 rounded-sm border border-[#7b7d80] bg-[#5c5e61] text-sm text-[#dedede]">AQ</button>
  <div class="ml-[67px] grid w-[234px] shrink-0 grid-cols-[218px_13px] gap-x-[3px]">
    <div class="h-[13px] rounded-xs border border-[#6f7174] p-0.5"><div class="grid h-full grid-cols-4 divide-x divide-[#4a4d50] bg-[#323437]"><div><div class="h-full w-[37px] bg-[#cfd4de]"></div></div><div></div><div></div><div></div></div></div><div class="h-[13px] rounded-xs border border-[#6f7174] p-0.5"><div class="h-full bg-[#323437]"></div></div>
    <div class="h-[12px] rounded-xs border border-[#6f7174] p-0.5"><div class="grid h-full grid-cols-4 divide-x divide-[#4a4d50] bg-[#323437]"><div><div class="h-full w-px bg-[#cfd4de]"></div></div><div></div><div></div><div></div></div></div><div class="h-[12px] rounded-xs border border-[#6f7174] p-0.5"><div class="h-full bg-[#323437]"></div></div>
  </div>
  <div class="ml-[9px] flex h-8 w-[352px] shrink-0 items-center rounded-sm border-2 border-[#bfc1c3] bg-[#737475]">
    <button aria-label="Go to start" class="flex w-[37px] justify-center"><svg class="size-[22px]"><use href="#start"/></svg></button>
    <button aria-label="Go to end" class="flex w-[38px] justify-center"><svg class="size-[22px]"><use href="#end"/></svg></button>
    <button aria-label="Rewind" class="flex w-[38px] justify-center"><svg class="size-[22px]"><use href="#rew"/></svg></button>
    <button aria-label="Forward" class="flex w-[38px] justify-center"><svg class="size-[22px]"><use href="#fwd"/></svg></button>
    <button aria-label="Cycle" class="flex w-[49px] justify-center"><svg class="size-[20px]"><use href="#cycle"/></svg></button>
    <button aria-label="Stop" class="flex h-full w-[50px] items-center justify-center bg-[#e3ebf3] text-black"><svg class="size-[22px]"><use href="#stop"/></svg></button>
    <button aria-label="Play" class="flex w-[50px] justify-center"><svg class="size-[24px]"><use href="#play"/></svg></button>
    <button aria-label="Record" class="flex flex-1 justify-center"><svg class="size-[26px]"><use href="#ring"/></svg></button>
  </div>
  <div class="-mx-0.5 h-3 border-l-2 border-dotted border-[#aaa]"></div>
  <button aria-label="Punch" class="ml-[3px] flex h-[25px] w-[38px] shrink-0 items-center justify-center rounded-sm border border-[#7b7d80] bg-[#5c5e61]"><svg class="size-[22px]"><use href="#punch"/></svg></button>
  <div class="mr-0.5 flex h-[25px] w-[150px] shrink-0 rounded-sm border border-[#6f7174] bg-[#1b1c20]">
    <button aria-label="Time format" class="flex w-6 items-center justify-center border-r border-[#6f7174]"><svg class="size-[22px]"><use href="#clock"/></svg></button>
    <input aria-label="Transport time" value="0:00:00.000" class="w-0 flex-1 bg-transparent pr-1.5 text-right text-[15px] outline-none">
  </div>
  <div class="flex h-[25px] w-[150px] shrink-0 rounded-sm border border-[#6f7174] bg-[#1b1c20]">
    <button aria-label="Timecode" class="flex w-6 items-center justify-center border-r border-[#6f7174]"><span class="rounded-xs border-2 border-white px-px text-[9px] leading-[10px]">TC</span></button>
    <input aria-label="Transport timecode" value="00.00.00.00" class="w-0 flex-1 bg-transparent pr-1.5 text-right text-[15px] outline-none">
  </div>
  <div class="-mx-0.5 h-3 border-l-2 border-dotted border-[#aaa]"></div>
  <div class="ml-[3px] flex h-[25px] w-[157px] shrink-0 items-center overflow-hidden rounded-sm border border-[#6f7174] bg-[#1b1c20]">
    <button aria-label="Tempo track" class="flex h-full w-6 items-center justify-center bg-[#f2f2f2] text-black"><svg class="size-[22px]"><use href="#tempo"/></svg></button>
    <input aria-label="Tempo" value="120.000" class="w-[58px] bg-transparent text-right text-xs outline-none">
    <svg class="mx-2 h-4 w-2" viewBox="0 0 8 16"><path fill="#fff" d="M0 6h8L4 0zM0 10h8l-4 6z"/></svg>
    <input aria-label="Time signature" value="4/4" class="h-full w-0 flex-1 border-l border-[#6f7174] bg-transparent pl-1.5 text-xs outline-none">
  </div>
  <div class="-mx-0.5 h-3 border-l-2 border-dotted border-[#aaa]"></div>
  <div class="ml-auto flex h-[25px] w-[50px] shrink-0 items-center justify-around rounded-sm border border-[#7b7d80] bg-[#5c5e61] text-[#e2e2e2]"><button aria-label="Merge"><svg class="size-5"><use href="#merge"/></svg></button><button aria-label="Edit click"><svg class="size-4"><use href="#edit"/></svg></button></div>
  <div class="flex h-[25px] w-[225px] shrink-0 overflow-hidden rounded-sm border border-[#6f7174] bg-[#1b1c20]">
    <div class="flex w-[50px] items-center justify-around border-r border-[#7b7d80] bg-[#5c5e61]"><button aria-label="Metronome"><svg class="size-5"><use href="#metro"/></svg></button><button aria-label="Count-in"><svg class="size-5"><use href="#count"/></svg></button></div>
    <div class="flex flex-1 justify-between py-[3px] pr-5 pl-1"><div class="h-[3px] w-[19px] bg-white"></div><div class="h-[3px] w-[19px] self-end bg-white"></div><div class="h-[3px] w-[19px] self-end bg-white"></div><div class="h-[3px] w-[19px] self-end bg-white"></div></div>
    <button aria-label="Click pattern" class="flex w-6 items-center justify-center bg-[#5c5e61]"><svg class="size-4"><use href="#edit"/></svg></button>
  </div>
  <div class="-mx-0.5 h-3 border-l-2 border-dotted border-[#aaa]"></div>
  <div class="ml-[3px] h-[25px] w-[89px] shrink-0 rounded-sm border border-[#6f7174] bg-[#1b1c20]"><div class="ml-[25px] h-full w-px bg-[#55585b]"></div></div>
  <div class="-mx-0.5 h-3 border-l-2 border-dotted border-[#aaa]"></div>
  <button aria-label="Transport setup" class="ml-[3px] flex h-[25px] w-[19px] shrink-0 items-center justify-center rounded-sm border border-[#6f7174] bg-[#1b1c20]"><svg class="size-[14px]"><use href="#gear"/></svg></button>
</footer>

<script>
const icon = (id, cls) => `<svg class="${cls}"><use href="#${id}"/></svg>`;

// Track list
const tracks = [
  { name: 'Beds', folder: true, tint: 'bg-[#4690dd]' },
  { name: 'C', num: 1, selected: true, tint: 'bg-[#4690dd]' },
  { name: 'Objects', folder: true, tint: 'bg-[#7350e2]' },
  { name: 'FHL', num: 2, tint: 'bg-[#7350e2]', clip: 0 },
  { name: 'FHR', num: 3, tint: 'bg-[#7350e2]', clip: 230 },
  { name: 'RHL', num: 4, tint: 'bg-[#7350e2]', clip: 435 },
  { name: 'RHR', num: 5, tint: 'bg-[#7350e2]', clip: 666 },
];
const box = sel => sel ? 'border-[#5a5a5a] bg-[#f1f1f1]' : 'border-[#1a1c1e] bg-[#4d5053]';
document.getElementById('tracks').innerHTML = tracks.map((t, i) => {
  const b = box(t.selected);
  const dim = t.selected ? 'text-[#777]' : 'text-[#2b2e30]';
  const ink = t.selected ? 'text-black' : 'text-[#151617]';
  const group = (cls, inner) => `<div class="flex h-4 items-center justify-around rounded-xs border ${b} ${cls}">${inner}</div>`;
  const controls = t.folder
    ? group('w-[46px] text-black', `<button aria-label="Record">${icon('rec', 'size-3')}</button><button aria-label="Monitor">${icon('spk', 'size-[10px]')}</button>`)
      + group('ml-0.5 w-[21px] text-black', `<button aria-label="Group">${icon('eq', 'size-[10px]')}</button>`)
    : group('w-12 ' + dim, `<button aria-label="Record">${icon('rec', 'size-3')}</button><button aria-label="Monitor">${icon('spk', 'size-[10px]')}</button>`)
      + group('w-[51px] ' + ink, `<button aria-label="Edit">${icon('edit', 'size-3')}</button><button aria-label="Bypass">${icon('ring', 'size-3')}</button>`)
      + group("w-12 font-['DejaVu_Sans',sans-serif] text-[10px] font-bold leading-3 " + ink, '<button>R</button><button>W</button>')
      + group('w-[23px] ' + ink, `<button aria-label="Lanes">${icon('lanes', 'size-4')}</button>`)
      + group('w-[23px] ' + ink, `<button aria-label="Freeze">${icon('freeze', 'size-[13px]')}</button>`)
      + group('w-[23px] ' + ink, `<button aria-label="Time base">${icon('clockw', 'size-[14px]')}</button>`);
  return `<div class="flex ${i ? 'h-[110px]' : 'h-[109px]'} border-b border-[#6c6e70]">
    ${t.folder ? '' : '<div class="w-3 bg-[#0a0a0a]"></div>'}
    <div class="flex items-start justify-between ${t.folder ? 'w-[52px] pl-0.5' : 'w-10 pr-1'} ${t.tint}">
      ${icon(t.folder ? 'folder' : 'wave', 'size-5')}${t.num ? `<span class="pt-1 text-[10px] leading-[15px] text-[#1d2b52]">${t.num}</span>` : ''}
    </div>
    <div class="flex-1 pt-0.5 pl-1.5 ${t.selected ? 'bg-[#e9e9e9] text-black' : ''}">
      <div class="flex items-center">
        <div class="flex h-[17px] w-[45px] rounded-xs border ${b} font-['DejaVu_Sans',sans-serif] text-[11px] leading-[14px] font-bold text-black"><button class="flex-1 border-r ${t.selected ? 'border-[#5a5a5a]' : 'border-[#1a1c1e]'}">m</button><button class="flex-1">S</button></div>
        <span class="${t.folder ? 'ml-[5px]' : 'ml-1'} text-[13px] leading-[17px] font-bold">${t.name}</span>
      </div>
      <div class="mt-1 flex gap-0.5 ${t.folder ? 'pl-[50px]' : 'pl-12'}">${controls}</div>
    </div>
    <div class="w-[11px] bg-black"></div>
  </div>`;
}).join('') + `<div class="flex h-5 border-b border-[#6c6e70] text-[11px] font-bold">
    <div class="w-10 bg-[#909193]">${icon('shut', 'ml-0.5 size-5')}</div><span class="flex-1 pl-2.5 leading-5">Вх./Вых. каналы</span><div class="w-[11px] bg-black"></div></div>`;

// Ruler and bar lines
const BAR = 28.55;
const ruler = document.getElementById('ruler');
const area = document.getElementById('lanes-area');
for (let n = 0; n < 35; n++) {
  const x = Math.round(n * BAR);
  if (n % 2 === 0) ruler.insertAdjacentHTML('beforeend', `<div class="absolute top-0 h-6 ${n ? 'border-l border-black' : ''} pt-[9px] pl-1 leading-4" style="left:${x - 1}px">${n + 1}</div>`);
  if (n) area.insertAdjacentHTML('beforeend', `<div class="absolute inset-y-0 w-px ${n % 2 ? 'bg-[#5d6369]' : 'bg-[#7c7f81]'}" style="left:${x - 1}px"></div>`);
}

// Envelopes of the audio clip: pairs of position and height
const up = [0,1,15,1,20,3,24,4,26,10,28,30,31,38,33,37,34,22,37,14,40,8,43,4,57,3,62,7,68,11,75,16,78,28,82,42,86,48,91,50,93,40,96,26,100,17,105,14,110,9,115,5,140,3,148,4,152,14,155,24,157,26,160,22,163,20,166,15,170,7,178,5,182,10,187,17,195,17,203,19,206,10,209,11,213,8,220,9,230,6,245,5,268,6,277,1,292,1];
const down = [0,1,15,1,20,2,25,5,28,28,32,32,34,20,37,11,42,5,52,5,60,4,66,8,75,14,78,28,82,40,86,46,92,47,95,28,100,18,107,10,115,5,145,4,150,5,153,15,157,29,162,22,167,15,170,5,178,7,185,17,190,19,197,16,203,18,207,10,215,12,225,7,240,5,265,6,277,1,292,1];
const level = (e, x) => { let i = 2; while (i < e.length - 2 && e[i] < x) i += 2; const a = e[i-2], b = e[i]; return e[i-1] + (e[i+1] - e[i-1]) * Math.min(1, (x - a) / (b - a)); };
let seed = 7;
const rnd = () => (seed = (seed * 16807) % 2147483647) / 2147483647;
let wave = '';
for (let x = 0; x < 292; x++) {
  let u = level(up, x), d = level(down, x);
  if (u > 2) { u = Math.round(u * (.8 + rnd() * .22)); d = Math.round(d * (.8 + rnd() * .22)); }
  wave += `M${x} ${52 - u}h1v${u + d}h-1z`;
}
tracks.forEach((t, i) => {
  let bars = '';
  if (t.clip !== undefined) {
    for (let n = 1; n < 35; n++) { const x = Math.round(n * BAR) - 2 - t.clip; if (x > 0 && x < 292) bars += `M${x} 0h1v105h-1z`; }
  }
  area.insertAdjacentHTML('beforeend', `<div class="relative h-[110px] border-b border-[#434a52]">${t.clip === undefined ? '' : `
    <div class="absolute top-0.5 h-[105px] w-[293px] border border-[#9580f5] bg-[#56449f] outline outline-[#2c109c]" style="left:${t.clip}px">
      <svg class="absolute inset-0 h-[103px] w-[291px]"><path fill="#3a1ea2" d="${bars}"/><path fill="#050308" d="${wave}"/></svg>
      <div class="absolute top-0 left-0 bg-[#704fd6]/90 pr-1 pl-[3px] text-[10px] leading-[17px] font-bold text-[#e6e0fb]">sample</div>
    </div>`}</div>`);
});
area.insertAdjacentHTML('beforeend', '<div class="h-5 border-b border-[#434a52]"></div>');

// Channel fader scale
const fader = document.getElementById('faderScale');
[[12,14],[6,37],[0,61],[5,80],[10,100],[15,119],[20,139],[30,164],[40,177],[60,190],['00',200]].forEach(([v, y]) =>
  fader.insertAdjacentHTML('beforeend', `<div class="absolute right-[3px] left-[19px] flex h-2 items-center" style="top:${y - 4}px"><div class="h-px w-[18px] bg-[#6a6d70]"></div><span class="ml-auto leading-2">${v}</span></div>`));
const lvl = document.getElementById('meterScale');
[[0,15],[6,42],[12,69],[18,96],[24,122],[30,146],[40,177],[50,198]].forEach(([v, y]) =>
  lvl.insertAdjacentHTML('beforeend', `<div class="absolute inset-x-0.5 flex h-2 items-center justify-between" style="top:${y - 5}px"><div class="h-px w-[9px] bg-[#3d4043]"></div><span class="leading-2">${v}</span><div class="h-px w-[9px] bg-[#3d4043]"></div></div>`));

// Master meter scale
const ms = document.getElementById('masterScale');
const marks = [[0,3],[5,87],[10,170],[15,254],[20,336],[25,406],[30,468],[35,523],[40,571],[50,638],[60,665]];
marks.forEach(([v, y], i) => {
  ms.insertAdjacentHTML('beforeend', `<div class="absolute inset-x-0 flex h-4 items-center" style="top:${y - 8}px"><span class="w-[43px] text-right">${v}</span><div class="ml-[7px] h-px w-2 bg-white"></div><div class="ml-[96px] h-px w-2 bg-white"></div><span class="pl-[3px]">${v}</span></div>`);
  const next = marks[i + 1];
  const parts = i < 8 ? 5 : i === 8 ? 2 : 0;
  for (let k = 1; next && k < parts; k++) {
    const ty = Math.round(y + (next[1] - y) * k / parts);
    ms.insertAdjacentHTML('beforeend', `<div class="absolute left-[54px] h-px w-1 bg-white" style="top:${ty}px"></div><div class="absolute left-[154px] h-px w-1 bg-white" style="top:${ty}px"></div>`);
  }
});
</script>
</body>
</html>
